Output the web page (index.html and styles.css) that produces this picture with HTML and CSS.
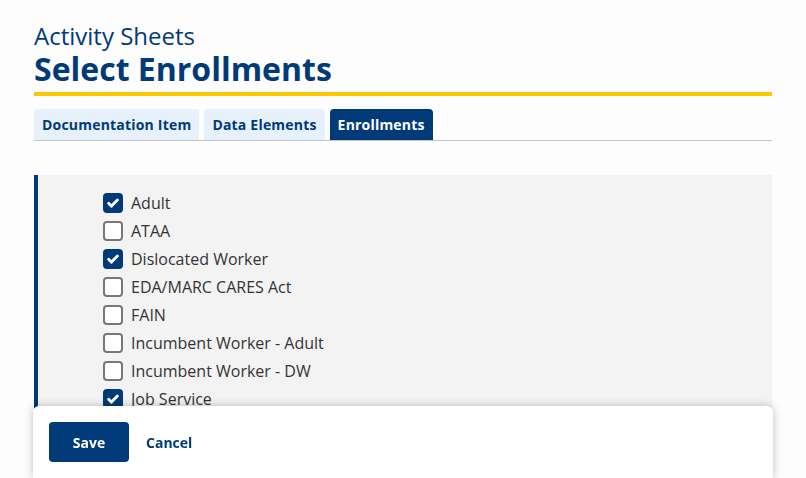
FILE: index.html
```html
<!DOCTYPE html>
<html lang="en">
<head>
     <meta charset="UTF-8">
     <meta name="viewport" content="width=device-width, initial-scale=1.0">
     <title>Select Enrollments</title>
     <link rel="stylesheet" href="styles.css">
</head>
<body>
     <div class="wrapper">
          <div class="page-head">
               <div class="page-sub">Activity Sheets</div>
               <h1 class="page-title">Select Enrollments</h1>
          </div>
          <div class="tabs">
               <div class="tab">Documentation Item</div>
               <div class="tab">Data Elements</div>
               <div class="tab active">Enrollments</div>
          </div>
          <div class="panel">
               <ul class="check-list">
                    <li><span class="box checked"><svg viewBox="0 0 20 20"><path d="M4.5 10.3l3.6 3.6 7.4-7.6"/></svg></span>Adult</li>
                    <li><span class="box"></span>ATAA</li>
                    <li><span class="box checked"><svg viewBox="0 0 20 20"><path d="M4.5 10.3l3.6 3.6 7.4-7.6"/></svg></span>Dislocated Worker</li>
                    <li><span class="box"></span>EDA/MARC CARES Act</li>
                    <li><span class="box"></span>FAIN</li>
                    <li><span class="box"></span>Incumbent Worker - Adult</li>
                    <li><span class="box"></span>Incumbent Worker - DW</li>
                    <li><span class="box checked"><svg viewBox="0 0 20 20"><path d="M4.5 10.3l3.6 3.6 7.4-7.6"/></svg></span>Job Service</li>
               </ul>
          </div>
     </div>
     <div class="footer">
          <button class="btn-save">Save</button>
          <button class="btn-cancel">Cancel</button>
     </div>
</body>
</html>
```

FILE: styles.css
```css
body{
     margin: 0;
     background: #fdfdfd;
     font-family: "Open Sans", "Liberation Sans", sans-serif;
     color: #003a78;
     height: 478px;
     overflow: hidden;
}
.wrapper{
     width: 738px;
     margin: 0 auto;
     padding-top: 21px;
}
.page-head{
     border-bottom: 4px solid #fcc800;
     padding-bottom: 5px;
}
.page-sub{
     font-size: 24px;
     line-height: 29px;
}
.page-title{
     margin: 1px 0 0;
     font-size: 32px;
     font-weight: bold;
     line-height: 36px;
}
.tabs{
     display: flex;
     gap: 5px;
     margin-top: 13px;
     border-bottom: 1px solid #c4c4c4;
}
.tab{
     background: #e7f1fc;
     font-size: 14px;
     font-weight: bold;
     letter-spacing: 0.2px;
     line-height: 31px;
     padding: 0 8px;
     border-radius: 4px 4px 0 0;
}
.tab.active{
     background: #003a78;
     color: white;
}
.panel{
     margin-top: 34px;
     background: #f3f3f3;
     border-left: 4px solid #003a78;
     padding: 14px 0 40px 65px;
}
.check-list{
     list-style: none;
     margin: 0;
     padding: 0;
}
.check-list li{
     display: flex;
     align-items: center;
     height: 28px;
     font-size: 16px;
     color: #333;
}
.box{
     width: 16px;
     height: 16px;
     border: 2px solid #777;
     border-radius: 4px;
     background: white;
     margin-right: 8px;
     display: flex;
}
.box.checked{
     background: #003a78;
     border-color: #003a78;
}
.box svg{
     width: 16px;
     height: 16px;
     fill: none;
     stroke: white;
     stroke-width: 3.6;
     stroke-linecap: round;
     stroke-linejoin: round;
}
.footer{
     position: fixed;
     bottom: 0;
     left: 33px;
     width: 708px;
     height: 40px;
     padding: 16px;
     background: white;
     border-radius: 6px 6px 0 0;
     box-shadow: 0 0 8px rgba(0,0,0,0.25);
     display: flex;
     gap: 17px;
     align-items: flex-start;
}
.footer button{
     font-family: "Open Sans", "Liberation Sans", sans-serif;
     font-size: 14px;
     font-weight: bold;
     border: none;
     cursor: pointer;
}
.btn-save{
     width: 80px;
     height: 40px;
     background: #003a78;
     color: white;
     border-radius: 4px;
}
.btn-cancel{
     height: 40px;
     background: none;
     color: #003a78;
     padding: 0;
}
```
